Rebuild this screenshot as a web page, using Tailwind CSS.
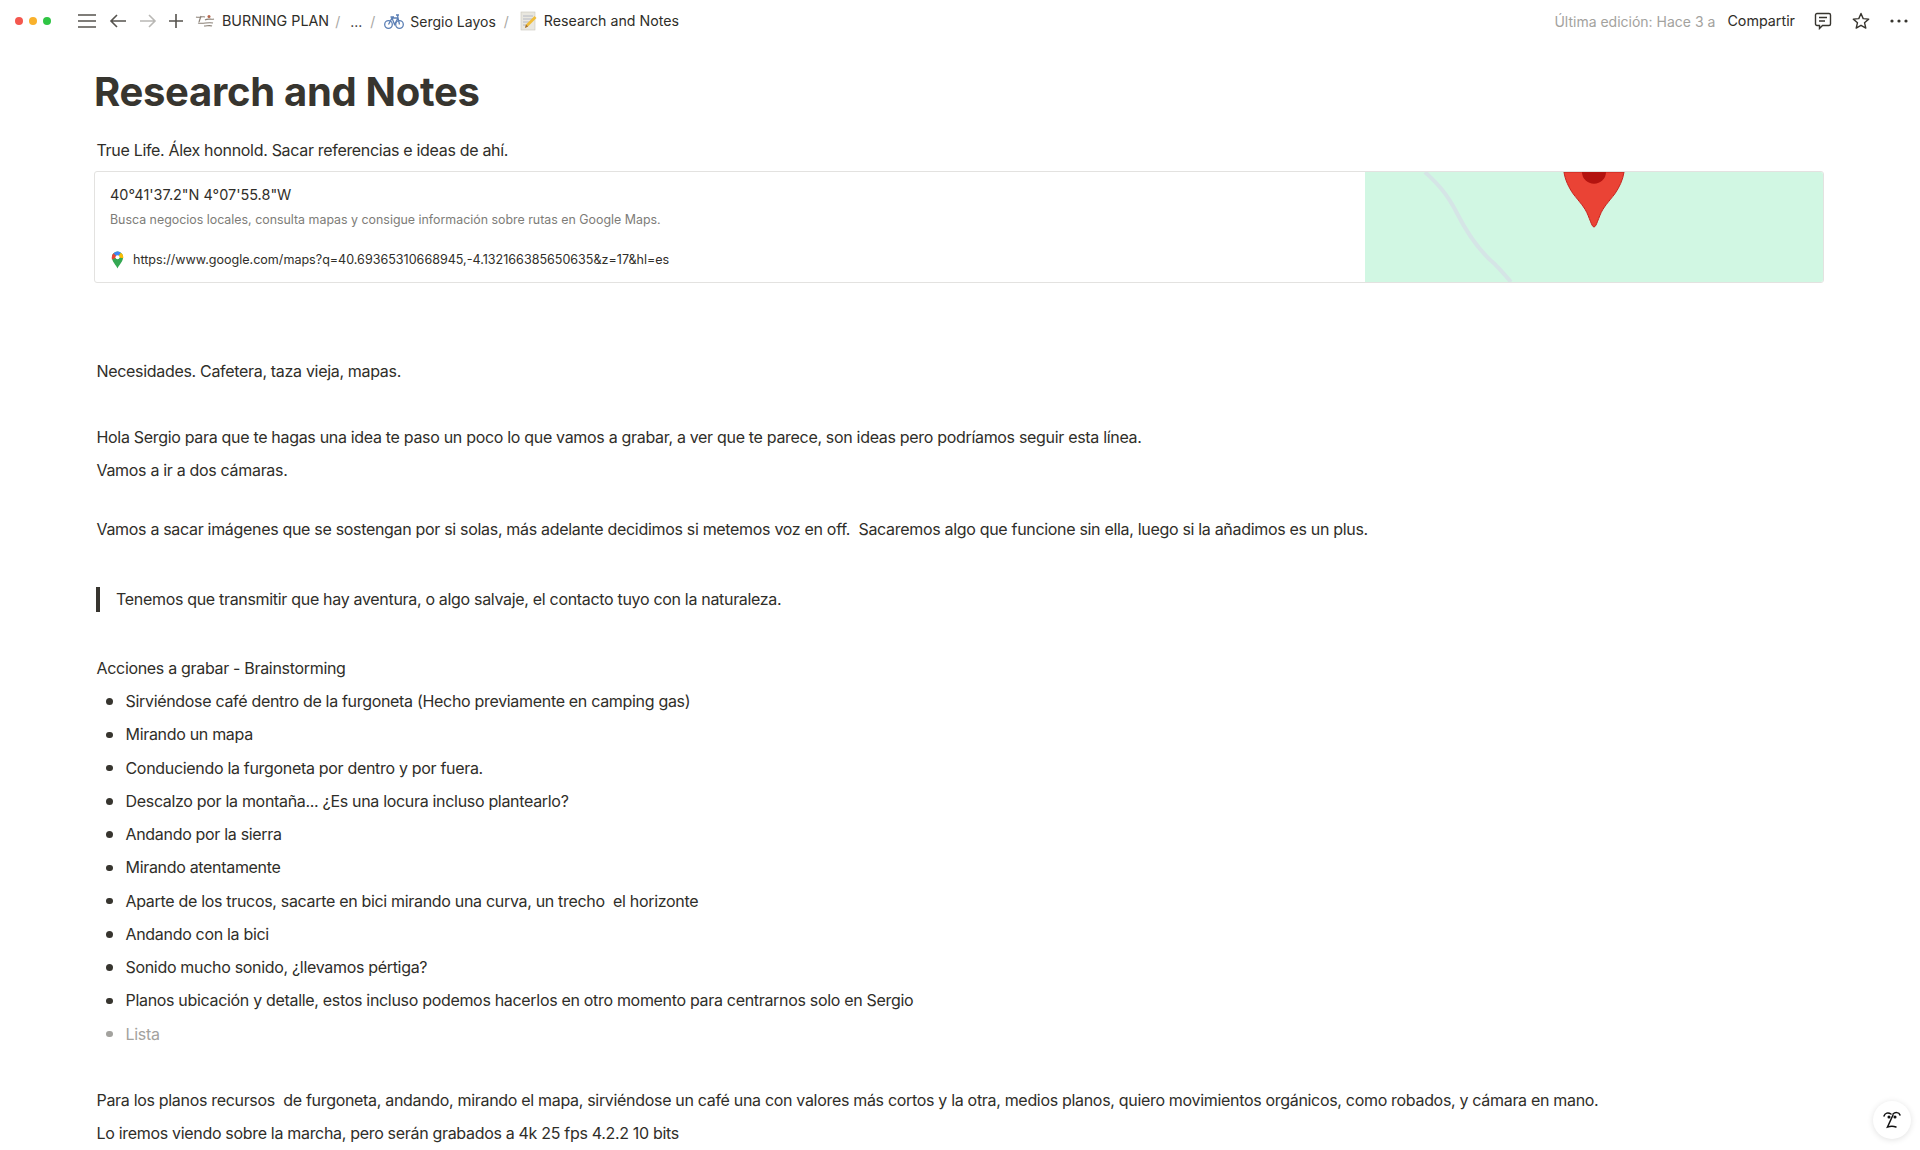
<!DOCTYPE html>
<html lang="es">

<head>
    <meta charset="UTF-8">
    <meta name="viewport" content="width=device-width, initial-scale=1.0">
    <title>Research and Notes</title>
    <script src="https://cdn.jsdelivr.net/npm/@tailwindcss/browser@4"></script>
</head>

<body class="h-screen overflow-hidden bg-white font-['Inter',sans-serif] text-[#2f2e29] relative">

    <!-- Top bar -->
    <header class="h-[42px] flex items-center justify-between text-[14px]">
        <div class="flex items-center">
            <div class="flex items-center gap-[6px] pl-[15px]">
                <span class="w-2 h-2 rounded-full bg-[#f4574e]"></span>
                <span class="w-2 h-2 rounded-full bg-[#f9b12c]"></span>
                <span class="w-2 h-2 rounded-full bg-[#2fc544]"></span>
            </div>
            <svg class="ml-[27px]" width="18" height="14" viewBox="0 0 18 14" fill="none" stroke="#55534e" stroke-width="1.5"><path d="M0 1h18M0 7h18M0 13h18" /></svg>
            <svg class="ml-[13px]" width="18" height="14" viewBox="0 0 18 14" fill="none" stroke="#55534e" stroke-width="1.6"><path d="M17 7H2M8 1 2 7l6 6" /></svg>
            <svg class="ml-[12px]" width="18" height="14" viewBox="0 0 18 14" fill="none" stroke="#b9b8b5" stroke-width="1.6"><path d="M1 7h15M10 1l6 6-6 6" /></svg>
            <svg class="ml-[11px]" width="16" height="16" viewBox="0 0 16 16" fill="none" stroke="#55534e" stroke-width="1.6"><path d="M8 1v14M1 8h14" /></svg>
            <!-- burning plan logo -->
            <svg class="ml-[11px]" width="20" height="14" viewBox="0 0 20 14" fill="none"><path d="M1 3c3 1 6-1 9 0M6 2 4 8M10 6c3-2 6 0 9-1M3 9c5 1 10-1 15 0M9 12c3 0 6-1 8 0" stroke="#8a8076" stroke-width="1.2" /><circle cx="14" cy="2.500" r="1.500" fill="#b5654a" /></svg>
            <span class="ml-[7px] text-[14.3px]">BURNING PLAN</span>
            <span class="ml-[6px] text-[#a8a7a3]">/</span>
            <span class="ml-[10px]">...</span>
            <span class="ml-[8px] text-[#a8a7a3]">/</span>
            <!-- bike -->
            <svg class="ml-[9px]" width="20" height="18" viewBox="0 0 20 18" fill="none" stroke="#5b7fb5" stroke-width="1.300"><circle cx="4.500" cy="12.500" r="3.800" /><circle cx="15.500" cy="12.500" r="3.800" /><path d="M4.500 12.500 8 6h6l1.500 6.500M8 6l2.500 6.500L14 6M6.500 5H10M13.500 3l.5 3M12 3h3" /></svg>
            <span class="ml-[6px]">Sergio Layos</span>
            <span class="ml-[8px] text-[#a8a7a3]">/</span>
            <!-- memo -->
            <svg class="ml-[11px]" width="17" height="20" viewBox="0 0 17 20"><rect x="1" y="1" width="14" height="18" fill="#e9e7df" stroke="#c9c6bb" stroke-width=".6" /><path d="M3 5h10M3 8h10M3 11h6M3 14h4" stroke="#b4b8c4" stroke-width="1" /><path d="M14.500 5 16.500 7 8 15.500 5 17l1-3.500z" fill="#f0bd3a" /><path d="M5 17l1-3.500 2 2z" fill="#9a6a3a" /></svg>
            <span class="ml-[7px] text-[14.2px]">Research and Notes</span>
        </div>
        <div class="flex items-center pr-[12px]">
            <span class="text-[#a3a29e]">Última edición: Hace 3 a</span>
            <span class="ml-[12px] text-[14.3px]">Compartir</span>
            <svg class="ml-[19px]" width="18" height="18" viewBox="0 0 18 18" fill="none" stroke="#37352f" stroke-width="1.400"><path d="M3 1.500h12a1.500 1.500 0 0 1 1.500 1.500v9a1.500 1.500 0 0 1-1.500 1.500H8.500L5.500 16.500v-3H3A1.500 1.500 0 0 1 1.500 12V3A1.500 1.500 0 0 1 3 1.500z" /><path d="M5 5.500h8M5 9h6" /></svg>
            <svg class="ml-[20px]" width="18" height="18" viewBox="0 0 18 18" fill="none" stroke="#37352f" stroke-width="1.400" stroke-linejoin="round"><path d="M9 1.500 11.200 6.600l5.500.5-4.200 3.600 1.300 5.400L9 13.300l-4.800 2.800 1.300-5.400L1.300 7.100l5.500-.5z" /></svg>
            <svg class="ml-[20px]" width="18" height="4" viewBox="0 0 18 4" fill="#37352f"><circle cx="2" cy="2" r="1.600" /><circle cx="9" cy="2" r="1.600" /><circle cx="16" cy="2" r="1.600" /></svg>
        </div>
    </header>

    <main class="text-[16px] leading-[33px] tracking-[-0.315px]">
        <h1 class="mt-[26px] mb-[18px] pl-[94px] text-[40px] leading-[48px] font-bold text-[#37352f] tracking-[-0.3px]">Research and Notes</h1>
        <p class="pl-[96.5px]">True Life. Álex honnold. Sacar referencias e ideas de ahí.</p>

        <!-- Bookmark card -->
        <a class="mt-[4px] ml-[94px] w-[1730px] h-[112px] flex border border-[#e3e2e0] rounded-[3px] overflow-hidden tracking-normal">
            <div class="flex-1 pl-[15px] flex flex-col">
                <div class="mt-[13px] text-[14.45px] leading-[20px]">40°41'37.2"N 4°07'55.8"W</div>
                <div class="mt-[7px] text-[12.4px] leading-[16px] text-[#7d7c78]">Busca negocios locales, consulta mapas y consigue información sobre rutas en Google Maps.</div>
                <div class="mt-[23px] flex items-center text-[12.55px] leading-[16px]">
                    <svg class="ml-[1px]" width="13" height="18" viewBox="2.500 0 11 16"><path d="M8 15.500C6.500 12 3 9.500 3 5.500a5 5 0 0 1 10 0C13 9.500 9.500 12 8 15.500z" fill="#34a853" /><path d="M4.500 2 8 5.500 3 7.500C2.700 5 3.200 3.300 4.500 2z" fill="#ea4335" /><path d="M4.500 2A5 5 0 0 1 11 1.500L8 5.500z" fill="#4285f4" /><path d="M11 1.500A5 5 0 0 1 13 6.500L8 5.500z" fill="#fbbc04" /><circle cx="8" cy="5.500" r="1.800" fill="#fff" /></svg>
                    <span class="ml-[9px]">https://www.google.com/maps?q=40.69365310668945,-4.132166385650635&amp;z=17&amp;hl=es</span>
                </div>
            </div>
            <!-- Map preview -->
            <svg class="w-[458px] h-full shrink-0" viewBox="0 0 458 112" preserveAspectRatio="none">
                <rect width="458" height="112" fill="#d1f7e3" />
                <path d="M60 0C68 8 80 18 92 42 104 66 116 82 130 94 136 100 141 106 146 112" fill="none" stroke="#d5e5e6" stroke-width="4" />
                <path d="M199 0C200 8 204 16 208 22 214 30 220 36 223 44 225 49 226 52 227 54Q229 58 231 54C232 52 233 49 235 44 238 36 244 30 250 22 254 16 258 8 259 0z" fill="#ea4335" stroke="#c5221f" stroke-width="1" />
                <path d="M217 0a12 12 0 0 0 24 0z" fill="#b3130f" />
            </svg>
        </a>

        <p class="mt-[72px] pl-[96.5px]">Necesidades. Cafetera, taza vieja, mapas.</p>
        <p class="mt-[33px] pl-[96.5px]">Hola Sergio para que te hagas una idea te paso un poco lo que vamos a grabar, a ver que te parece, son ideas pero podríamos seguir esta línea.</p>
        <p class="pl-[96.5px]">Vamos a ir a dos cámaras.</p>
        <p class="mt-[26px] pl-[96.5px] whitespace-pre">Vamos a sacar imágenes que se sostengan por si solas, más adelante decidimos si metemos voz en off.  Sacaremos algo que funcione sin ella, luego si la añadimos es un plus.</p>

        <blockquote class="mt-[36.5px] ml-[96px] flex items-center">
            <span class="w-[4px] h-[25px] bg-[#37352f]"></span>
            <span class="ml-[16px]">Tenemos que transmitir que hay aventura, o algo salvaje, el contacto tuyo con la naturaleza.</span>
        </blockquote>

        <p class="mt-[36px] pl-[96.5px]">Acciones a grabar - Brainstorming</p>
        <ul class="mt-[0.5px] ml-[106px] leading-[33.25px]">
            <li class="flex items-center"><span class="w-[6.5px] h-[6.5px] rounded-full bg-[#37352f]"></span><span class="ml-[13px]">Sirviéndose café dentro de la furgoneta (Hecho previamente en camping gas)</span></li>
            <li class="flex items-center"><span class="w-[6.5px] h-[6.5px] rounded-full bg-[#37352f]"></span><span class="ml-[13px]">Mirando un mapa</span></li>
            <li class="flex items-center"><span class="w-[6.5px] h-[6.5px] rounded-full bg-[#37352f]"></span><span class="ml-[13px]">Conduciendo la furgoneta por dentro y por fuera.</span></li>
            <li class="flex items-center"><span class="w-[6.5px] h-[6.5px] rounded-full bg-[#37352f]"></span><span class="ml-[13px]">Descalzo por la montaña... ¿Es una locura incluso plantearlo?</span></li>
            <li class="flex items-center"><span class="w-[6.5px] h-[6.5px] rounded-full bg-[#37352f]"></span><span class="ml-[13px]">Andando por la sierra</span></li>
            <li class="flex items-center"><span class="w-[6.5px] h-[6.5px] rounded-full bg-[#37352f]"></span><span class="ml-[13px]">Mirando atentamente</span></li>
            <li class="flex items-center"><span class="w-[6.5px] h-[6.5px] rounded-full bg-[#37352f]"></span><span class="ml-[13px] whitespace-pre">Aparte de los trucos, sacarte en bici mirando una curva, un trecho  el horizonte</span></li>
            <li class="flex items-center"><span class="w-[6.5px] h-[6.5px] rounded-full bg-[#37352f]"></span><span class="ml-[13px]">Andando con la bici</span></li>
            <li class="flex items-center"><span class="w-[6.5px] h-[6.5px] rounded-full bg-[#37352f]"></span><span class="ml-[13px]">Sonido mucho sonido, ¿llevamos pértiga?</span></li>
            <li class="flex items-center"><span class="w-[6.5px] h-[6.5px] rounded-full bg-[#37352f]"></span><span class="ml-[13px]">Planos ubicación y detalle, estos incluso podemos hacerlos en otro momento para centrarnos solo en Sergio</span></li>
            <li class="flex items-center text-[#a3a29e]"><span class="w-[6.5px] h-[6.5px] rounded-full bg-[#a3a29e]"></span><span class="ml-[13px]">Lista</span></li>
        </ul>

        <p class="mt-[33.5px] pl-[96.5px] whitespace-pre">Para los planos recursos  de furgoneta, andando, mirando el mapa, sirviéndose un café una con valores más cortos y la otra, medios planos, quiero movimientos orgánicos, como robados, y cámara en mano.</p>
        <p class="pl-[96.5px]">Lo iremos viendo sobre la marcha, pero serán grabados a 4k 25 fps 4.2.2 10 bits</p>
    </main>

    <!-- Help button -->
    <div class="absolute left-[1873px] top-[1101px] w-[38px] h-[38px] rounded-full bg-white shadow-[0_1px_6px_rgba(0,0,0,0.12)] flex items-center justify-center">
        <svg width="22" height="22" viewBox="0 0 22 22" fill="none" stroke="#111" stroke-width="1.500" stroke-linecap="round"><path d="M3 7c1-3 4-4 7-2M12 5c2-2 6-2 7 1M12 6 6.500 18c3-1 6-1 8.500 0" /><circle cx="8" cy="8" r=".8" fill="#111" /><circle cx="14" cy="8" r=".8" fill="#111" /></svg>
    </div>

</body>

</html>
